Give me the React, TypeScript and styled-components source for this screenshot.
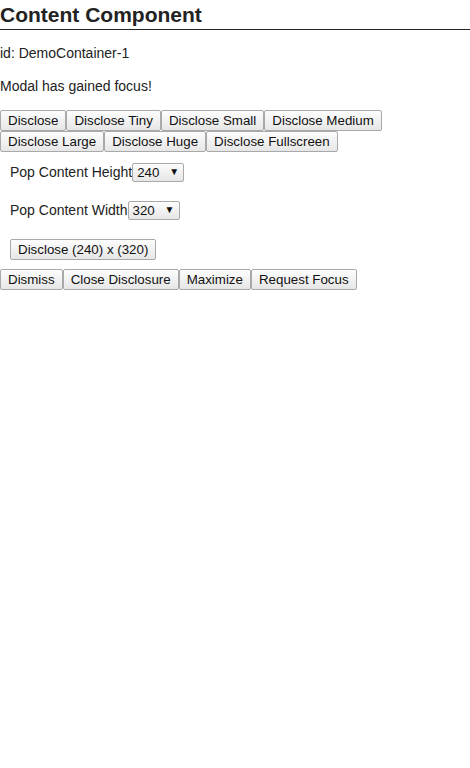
import styled, { createGlobalStyle } from "styled-components";

const GlobalStyle = createGlobalStyle`
  html, body {
    margin: 0;
    padding: 0;
    background: #fff;
    font-family: "Liberation Sans", Arial, sans-serif;
    color: #222;
  }
`;

const Page = styled.div`
  display: flex;
  flex-direction: column;
`;

const Title = styled.h2`
  margin: 0;
  font-size: 21px;
  font-weight: 700;
  line-height: 29px;
  border-bottom: 1px solid #222;
  color: #222;
`;

const Info = styled.p`
  margin: 0;
  font-size: 14px;
  line-height: 17px;
  padding-top: 15px;
  padding-bottom: 1px;
`;

const ButtonRows = styled.div<{ $top: number }>`
  display: flex;
  flex-wrap: wrap;
  max-width: 400px;
  margin-top: ${(p) => p.$top}px;
`;

const Button = styled.button`
  font-family: "Liberation Sans", Arial, sans-serif;
  font-size: 13.33px;
  height: 21px;
  padding: 0 7px;
  margin: 0;
  color: #111;
  background: linear-gradient(#fdfdfd, #e6e6e6);
  border: 1px solid #a9a9a9;
  border-radius: 2px;
  line-height: 19px;
  white-space: nowrap;
`;

const Field = styled.label<{ $top: number }>`
  display: flex;
  align-items: center;
  padding-left: 10px;
  font-size: 14px;
  margin-top: ${(p) => p.$top}px;
  height: 18px;
`;

const Select = styled.div`
  display: flex;
  align-items: center;
  justify-content: space-between;
  box-sizing: border-box;
  width: 52px;
  height: 19px;
  padding: 0 4px 0 4px;
  font-size: 13.33px;
  color: #111;
  background: linear-gradient(#fdfdfd, #e6e6e6);
  border: 1px solid #a9a9a9;
  border-radius: 2px;
`;

const Arrow = styled.span`
  font-size: 10px;
  margin-top: -2px;
`;

const Inset = styled.div`
  padding-left: 10px;
  margin-top: 20px;
`;

const App = () => (
  <Page>
    <GlobalStyle />
    <Title>Content Component</Title>
    <Info>id: DemoContainer-1</Info>
    <Info>Modal has gained focus!</Info>
    <ButtonRows $top={14}>
      <Button>Disclose</Button>
      <Button>Disclose Tiny</Button>
      <Button>Disclose Small</Button>
      <Button>Disclose Medium</Button>
      <Button>Disclose Large</Button>
      <Button>Disclose Huge</Button>
      <Button>Disclose Fullscreen</Button>
    </ButtonRows>
    <Field $top={11}>
      Pop Content Height
      <Select>
        240<Arrow>▼</Arrow>
      </Select>
    </Field>
    <Field $top={20}>
      Pop Content Width
      <Select>
        320<Arrow>▼</Arrow>
      </Select>
    </Field>
    <Inset>
      <Button>Disclose (240) x (320)</Button>
    </Inset>
    <ButtonRows $top={9}>
      <Button>Dismiss</Button>
      <Button>Close Disclosure</Button>
      <Button>Maximize</Button>
      <Button>Request Focus</Button>
    </ButtonRows>
  </Page>
);

export default App;
